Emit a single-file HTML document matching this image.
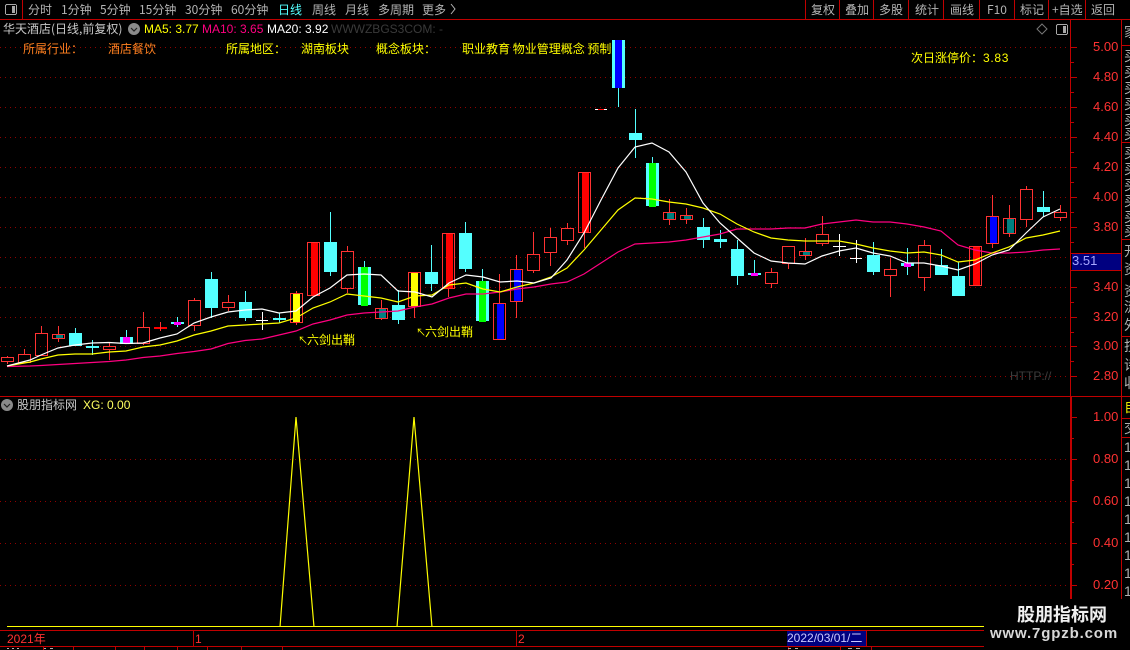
<!DOCTYPE html>
<html><head><meta charset="utf-8"><style>
html,body{margin:0;padding:0;background:#000}
#a{position:relative;width:1130px;height:650px;overflow:hidden;background:#000;font:12px/14px "WenQuanYi Zen Hei","Noto Sans CJK SC","Liberation Sans",sans-serif;color:#c0c0c0}
#a span{position:absolute;white-space:nowrap;line-height:14px}
.t{top:3px;color:#b4b4b4}
.r{color:#ff3232;font-family:"Liberation Sans",sans-serif;font-size:13px;left:1093px}
.l{font-family:"Liberation Sans","WenQuanYi Zen Hei",sans-serif}
.y{color:#ff0}.o{color:#ff8020}
.c{left:1124px;color:#b0b0b0;font-size:14px}
svg{position:absolute;left:0;top:0}
</style></head><body><div id="a">
<svg width="1130" height="650" shape-rendering="crispEdges" fill="none">
<path stroke="#900000" stroke-dasharray="1 4" d="M0 47.5H1070M0 77.5H1070M0 107.5H1070M0 137.5H1070M0 167.5H1070M0 197.5H1070M0 227.5H1070M0 257.5H1070M0 287.5H1070M0 317.5H1070M0 346.5H1070M0 376.5H1070M0 459.5H1070M0 501.5H1070M0 543.5H1070M0 585.5H1070"/>
<path stroke="#c00000" d="M0 19.5H1130M22.5 0V19M805.5 0V19M839.5 0V19M873.5 0V19M908.5 0V19M943.5 0V19M979.5 0V19M1014.5 0V19M1048.5 0V19M1085.5 0V19M0 630.5H1070M0 646.5H1070M193.5 630V646M516.5 630V646M43.5 646V650M73.5 646V650M115.5 646V650M144.5 646V650M177.5 646V650M207.5 646V650M241.5 646V650M282.5 646V650M788.5 646V650M840.5 646V650M871.5 646V650"/>
<path stroke="#c00000" d="M1070.5 20V600M1071.5 396V600M1121.5 20V600"/>
<path stroke="#c00000" d="M0 396.5H1130M1122 45.5H1130M1122 142.5H1130M1122 239.5H1130M1122 336.5H1130M1122 418.5H1130M1122 437.5H1130"/>
<path stroke="#c00000" d="M1071 47.5h6M1071 62.5h3M1071 77.5h6M1071 92.5h3M1071 107.5h6M1071 122.5h3M1071 137.5h6M1071 152.5h3M1071 167.5h6M1071 182.5h3M1071 197.5h6M1071 212.5h3M1071 227.5h6M1071 242.5h3M1071 287.5h6M1071 302.5h3M1071 317.5h6M1071 332.5h3M1071 346.5h6M1071 361.5h3M1071 376.5h6M1071 417.5h6M1071 438.5h3M1071 459.5h6M1071 480.5h3M1071 501.5h6M1071 522.5h3M1071 543.5h6M1071 564.5h3M1071 585.5h6"/>

<rect x="1072" y="254" width="49" height="16" fill="#000080"/>
<path stroke="#c00000" d="M1071 253.5H1122M1071 270.5H1122"/>

<!-- candle fills -->
<path fill="#54ffff" d="M69 333h13v13H69zM86 346h13v2H86zM120 337h13v7h-13zM171 322h13v2h-13zM205 279h13v29h-13zM239 302h13v16h-13zM273 318h13v2h-13zM324 242h13v30h-13zM358 267h13v38h-13zM392 305h13v15h-13zM425 272h13v12h-13zM459 233h13v36h-13zM476 281h13v40h-13zM612 40h13v48h-13zM629 133h13v7h-13zM646 163h13v43h-13zM697 227h13v13h-13zM714 239h13v3h-13zM731 249h13v27h-13zM748 273h13v2h-13zM867 255h13v17h-13zM901 263h13v3h-13zM935 265h13v10h-13zM952 276h13v20h-13zM1037 207h13v5h-13z"/>
<path stroke="#54ffff" d="M75.5 328V333M92.5 340V355M126.5 330V337M177.5 317V327M211.5 272V279M211.5 308V318M245.5 291V302M245.5 318V321M279.5 313V323M330.5 212V242M330.5 272V276M364.5 261V267M398.5 290V305M398.5 320V324M431.5 245V272M431.5 284V291M465.5 222V233M465.5 269V272M482.5 269V281M618.5 88V107M635.5 109V133M635.5 140V158M652.5 157V163M703.5 218V227M703.5 240V248M720.5 230V248M737.5 240V249M737.5 276V285M754.5 260V273M873.5 242V255M873.5 272V275M907.5 248V263M907.5 266V275M941.5 249V265M958.5 262V276M1043.5 191V207M1043.5 212V217"/>
<path fill="#ff0000" d="M154 327h13v2h-13zM311 243h7v52h-7zM446 234h7v54h-7zM582 173h7v59h-7zM973 247h7v38h-7z"/>
<path fill="#ffff00" d="M293 293h7v29h-7zM411 272h7v34h-7z"/>
<path fill="#008080" d="M56 334h7v4h-7zM379 308h7v10h-7zM667 212h7v7h-7zM684 215h7v5h-7zM803 251h7v4h-7zM1007 218h7v16h-7z"/>
<path fill="#0000ff" d="M497 303h7v36h-7zM514 269h7v32h-7zM615 40h7v48h-7zM990 216h7v27h-7z"/>
<path fill="#00ff00" d="M361 267h7v39h-7zM479 281h7v41h-7zM649 163h7v44h-7z"/>
<path fill="#ff00ff" d="M123 337h7v7h-7zM174 322h7v3h-7zM751 273h7v3h-7zM904 263h7v4h-7z"/>
<!-- red -->
<path stroke="#ff3232" d="M1.5 357.5h12v4h-12zM18.5 354.5h12v8h-12zM35.5 333.5h12v22h-12zM52.5 334.5h12v4h-12zM103.5 346.5h12v3h-12zM137.5 327.5h12v16h-12zM188.5 300.5h12v25h-12zM222.5 302.5h12v5h-12zM290.5 293.5h12v29h-12zM307.5 242.5h12v53h-12zM341.5 251.5h12v37h-12zM375.5 308.5h12v10h-12zM408.5 272.5h12v34h-12zM442.5 233.5h12v55h-12zM493.5 303.5h12v36h-12zM510.5 269.5h12v32h-12zM527.5 254.5h12v16h-12zM544.5 237.5h12v15h-12zM561.5 228.5h12v12h-12zM578.5 172.5h12v60h-12zM663.5 212.5h12v7h-12zM680.5 215.5h12v4h-12zM765.5 272.5h12v11h-12zM782.5 246.5h12v17h-12zM799.5 251.5h12v4h-12zM816.5 234.5h12v9h-12zM884.5 269.5h12v6h-12zM918.5 245.5h12v32h-12zM969.5 246.5h12v39h-12zM986.5 216.5h12v27h-12zM1003.5 218.5h12v15h-12zM1020.5 189.5h12v30h-12zM1054.5 212.5h12v5h-12z"/>
<path stroke="#ff3232" d="M7.5 356V357M7.5 362V364M24.5 349V354M41.5 326V333M58.5 326V334M58.5 339V342M109.5 343V346M109.5 350V360M143.5 312V327M143.5 344V345M160.5 322V331M194.5 298V300M194.5 326V331M228.5 295V302M228.5 308V311M296.5 291V293M296.5 323V325M347.5 246V251M347.5 289V293M381.5 300V308M381.5 319V320M414.5 307V318M448.5 289V297M499.5 274V303M516.5 255V269M516.5 302V318M533.5 232V254M533.5 271V273M550.5 228V237M550.5 253V266M567.5 223V228M567.5 241V245M584.5 233V248M669.5 199V212M669.5 220V225M686.5 208V215M686.5 220V224M771.5 268V272M771.5 284V288M788.5 264V269M805.5 238V251M805.5 256V260M822.5 216V234M822.5 244V246M890.5 258V269M890.5 276V297M924.5 240V245M924.5 278V291M992.5 195V216M992.5 244V248M1009.5 205V218M1009.5 234V237M1026.5 186V189M1026.5 220V227M1060.5 205V212M1060.5 218V221"/>
<!-- white crosses -->
<path stroke="#fff" d="M256 320.5H268M262.5 312V330M833 246.5H846M839.5 234V256M850 258.5H862M856.5 240V263M595 109.5H607"/>
<path stroke="#ff0000" d="M598 109.5H604"/>
<g shape-rendering="auto" stroke-width="1.2">
<polyline stroke="#ff0080" points="7,366.5 30,366 41,365.5 58,364.5 75,363.5 92,362.5 109,361.5 126,360 143,357.5 160,356 177,353.5 194,351.5 211,349 228,343.5 245,340.5 262,339 279,335 296,331 313,324 330,320 347,315 364,313 381,312 398,311 415,307 432,304 449,298 466,294 483,294 500,292 517,289 534,287 551,284 567,282 584,274 601,263 618,252 635,244 652,243 669,242 686,240 703,237 720,234 737,229 754,229 771,229 788,228 805,228 822,224 839,222 856,220 873,222 890,222 907,224 924,227 941,231 958,245 975,250 992,253 1009,253 1026,252 1043,250 1060,249"/>
<polyline stroke="#ffff00" points="7,366 30,362 41,359 58,355 75,354 92,354 109,352 126,351 143,347 160,345 177,341 194,335 211,331 228,326 245,325 262,324 279,323 296,318 313,308 330,302 347,294 364,296 381,298 398,302 415,296 432,295 449,285 466,283 483,289 500,292 517,287 534,283 551,277 567,268 584,250 601,230 618,210 635,198 652,199 669,202 686,204 703,208 720,214 737,224 754,232 771,238 788,240 805,241 822,241 839,241 856,244 873,248 890,251 907,253 924,252 941,255 958,262 975,260 992,253 1009,247 1026,238 1043,235 1060,231"/>
<polyline stroke="#ffffff" points="7,366 30,360 41,355 58,348 75,345 92,343 109,342.5 126,343.5 143,343 160,338 177,334 194,323 211,317 228,312 245,310 262,309 279,313 296,311 313,297 330,288 347,275 364,274 381,275 398,291 415,292 432,297 449,283 466,275 483,277 500,282 517,281 534,283 551,278 567,260 584,233 601,200 618,168 635,147 652,143 669,152 686,172 703,203 720,223 737,238 754,253 771,261 788,263 805,264 822,256 839,251 856,248 873,253 890,256 907,263 924,263 941,266 958,270 975,264 992,255 1009,250 1026,233 1043,217 1060,209"/>
</g>
<polyline shape-rendering="auto" stroke="#ffff00" stroke-width="1.2" points="280,627 296,417 314,627"/>
<polyline shape-rendering="auto" stroke="#ffff00" stroke-width="1.2" points="397,627 414,417 432,627"/>
<path stroke="#ffff00" d="M7 626.5H984"/>
<path stroke="#b0b0b0" d="M7 648.5h2M12 648.5h2M17 648.5h2M44 648.5h2M50 648.5h3M788 648.5h3M795 648.5h3M848 648.5h4M856 648.5h4"/>
<!-- icons -->
<rect x="5.5" y="4.5" width="11" height="10" rx="1.5" stroke="#a8a8a8"/><rect x="12" y="6" width="3" height="7" fill="#a8a8a8"/>
<rect x="1056.5" y="24.5" width="11" height="10" rx="1.5" stroke="#a8a8a8"/><rect x="1063" y="26" width="3" height="7" fill="#a8a8a8"/>
<path shape-rendering="auto" stroke="#777" d="M1042 24l5 5-5 5-5-5z"/>
<circle shape-rendering="auto" cx="134" cy="29" r="6" fill="#8a8a8a"/><path shape-rendering="auto" stroke="#222" stroke-width="1.2" d="M131 28l3 3 3-3"/>
<circle shape-rendering="auto" cx="7" cy="405" r="6" fill="#8a8a8a"/><path shape-rendering="auto" stroke="#222" stroke-width="1.2" d="M4 404l3 3 3-3"/>
<path shape-rendering="auto" stroke="#b4b4b4" d="M451 4l4 5-4 5"/>
</svg>

<span class="t" style="left:28px">分时</span><span class="t" style="left:61px">1分钟</span><span class="t" style="left:100px">5分钟</span><span class="t" style="left:139px">15分钟</span><span class="t" style="left:185px">30分钟</span><span class="t" style="left:231px">60分钟</span><span class="t" style="left:278px;color:#54ffff">日线</span><span class="t" style="left:312px">周线</span><span class="t" style="left:345px">月线</span><span class="t" style="left:378px">多周期</span><span class="t" style="left:422px">更多</span>
<span class="t" style="left:811px">复权</span><span class="t" style="left:845px">叠加</span><span class="t" style="left:879px">多股</span><span class="t" style="left:915px">统计</span><span class="t" style="left:950px">画线</span><span class="t" style="left:987px">F10</span><span class="t" style="left:1020px">标记</span><span class="t" style="left:1052px">+自选</span><span class="t" style="left:1091px">返回</span>

<span style="left:3px;top:22px;color:#c8c8c8">华天酒店(日线,前复权)</span>
<span class="l y" style="left:144px;top:22px">MA5: 3.77</span>
<span class="l" style="left:202px;top:22px;color:#ff0080">MA10: 3.65</span>
<span class="l" style="left:267px;top:22px;color:#fff">MA20: 3.92</span>
<span class="l" style="left:331px;top:22px;color:#3a3a3a">WWWZBGS3COM: -</span>

<span class="o" style="left:23px;top:42px">所属行业：</span><span class="o" style="left:108px;top:42px">酒店餐饮</span>
<span class="y" style="left:226px;top:42px">所属地区：</span><span class="y" style="left:301px;top:42px">湖南板块</span>
<span class="y" style="left:376px;top:42px">概念板块：</span><span class="y" style="left:462px;top:42px;width:150px;overflow:hidden">职业教育 物业管理概念 预制菜</span>
<span class="y" style="left:911px;top:51px">次日涨停价：</span><span class="y l" style="left:983px;top:51px;letter-spacing:.7px">3.83</span>
<span class="y" style="left:298px;top:333px;font-size:10px">↖</span><span class="y" style="left:307px;top:333px">六剑出鞘</span>
<span class="y" style="left:416px;top:325px;font-size:10px">↖</span><span class="y" style="left:425px;top:325px">六剑出鞘</span>
<span class="l" style="left:1010px;top:369px;color:#3c3c3c;font-size:12px">HTTP://</span>

<span class="r" style="top:40px">5.00</span><span class="r" style="top:70px">4.80</span><span class="r" style="top:100px">4.60</span><span class="r" style="top:130px">4.40</span><span class="r" style="top:160px">4.20</span><span class="r" style="top:190px">4.00</span><span class="r" style="top:220px">3.80</span><span class="r" style="top:280px">3.40</span><span class="r" style="top:310px">3.20</span><span class="r" style="top:339px">3.00</span><span class="r" style="top:369px">2.80</span>
<span class="l" style="left:1072px;top:254px;color:#a8a8ff;font-size:13px">3.51</span>
<span class="r" style="top:410px">1.00</span><span class="r" style="top:452px">0.80</span><span class="r" style="top:494px">0.60</span><span class="r" style="top:536px">0.40</span><span class="r" style="top:578px">0.20</span>

<span style="left:17px;top:398px;color:#c8c8c8">股朋指标网</span><span class="l" style="left:83px;top:398px;color:#ffff60">XG: 0.00</span>

<span class="l" style="left:7px;top:632px;color:#ff3232">2021年</span><span class="l" style="left:195px;top:632px;color:#ff3232">1</span><span class="l" style="left:518px;top:632px;color:#ff3232">2</span>
<span class="l" style="left:787px;top:631px;width:79px;height:15px;background:#000080;color:#c8c8ff;font-size:12px;line-height:15px;border-right:1px solid #c00000">2022/03/01/二</span>

<span class="c" style="top:25px">家</span><span class="c" style="top:49px">买</span><span class="c" style="top:65px">买</span><span class="c" style="top:81px">买</span><span class="c" style="top:97px">买</span><span class="c" style="top:113px">买</span><span class="c" style="top:127px">买</span>
<span class="c" style="top:146px">买</span><span class="c" style="top:162px">买</span><span class="c" style="top:178px">买</span><span class="c" style="top:194px">买</span><span class="c" style="top:210px">买</span><span class="c" style="top:224px">买</span>
<span class="c" style="top:244px">开</span><span class="c" style="top:262px">资</span><span class="c" style="top:284px">资</span><span class="c" style="top:300px">流</span><span class="c" style="top:318px">外</span>
<span class="c" style="top:339px">技</span><span class="c" style="top:358px">诗</span><span class="c" style="top:376px">收</span>
<span class="c" style="top:400px;color:#e8e800">自</span><span class="c" style="top:421px">交</span>
<span class="l c" style="top:440px">1</span><span class="l c" style="top:458px">1</span><span class="l c" style="top:476px">1</span><span class="l c" style="top:494px">1</span><span class="l c" style="top:512px">1</span><span class="l c" style="top:530px">1</span><span class="l c" style="top:548px">1</span><span class="l c" style="top:566px">1</span><span class="l c" style="top:584px">1</span>

<div style="position:absolute;left:984px;top:599px;width:146px;height:51px;background:#000"></div>
<span style="left:1017px;top:604px;color:#f0f0f0;font:bold 18px/20px 'Noto Sans CJK SC',sans-serif">股朋指标网</span>
<span style="left:990px;top:626px;color:#d8d8d8;font:bold 15px/16px 'Liberation Sans',sans-serif;letter-spacing:.85px">www.7gpzb.com</span>
</div></body></html>
